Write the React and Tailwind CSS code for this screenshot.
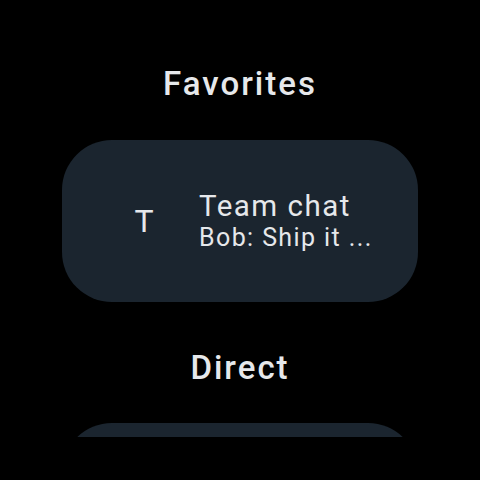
import React from 'react';

const font = { fontFamily: 'Roboto, "Noto Sans", sans-serif' };

const ChatCard = ({ initial, title, preview }) => (
    <div className="mx-[62px] h-[162px] rounded-[50px] bg-[#1b252f] flex items-center pl-[54px]">
        {initial && (
            <>
                <div className="w-[56px] flex justify-center text-[32px] text-[#e6e8eb]">{initial}</div>
                <div className="ml-[27px] flex flex-col">
                    <span className="text-[29.5px] leading-[34px] tracking-[1.5px] text-[#e6e8eb]">{title}</span>
                    <span className="text-[25px] leading-[30px] tracking-[1.4px] text-[#e6e8eb]">{preview}</span>
                </div>
            </>
        )}
    </div>
);

const App = () => {
    return (
        <div className="w-[480px] h-[480px] bg-black" style={font}>
            <div className="h-[437px] overflow-hidden flex flex-col">
                <h2 className="mt-[64px] h-[40px] flex items-center justify-center text-[33px] tracking-[2px] font-medium text-[#e6e8eb]">
                    Favorites
                </h2>
                <div className="mt-[36px]">
                    <ChatCard initial="T" title="Team chat" preview="Bob: Ship it ..." />
                </div>
                <h2 className="mt-[46px] h-[40px] flex items-center justify-center text-[33px] tracking-[2px] font-medium text-[#e6e8eb]">
                    Direct
                </h2>
                <div className="mt-[35px] shrink-0">
                    <ChatCard />
                </div>
            </div>
        </div>
    );
};

export default App;
